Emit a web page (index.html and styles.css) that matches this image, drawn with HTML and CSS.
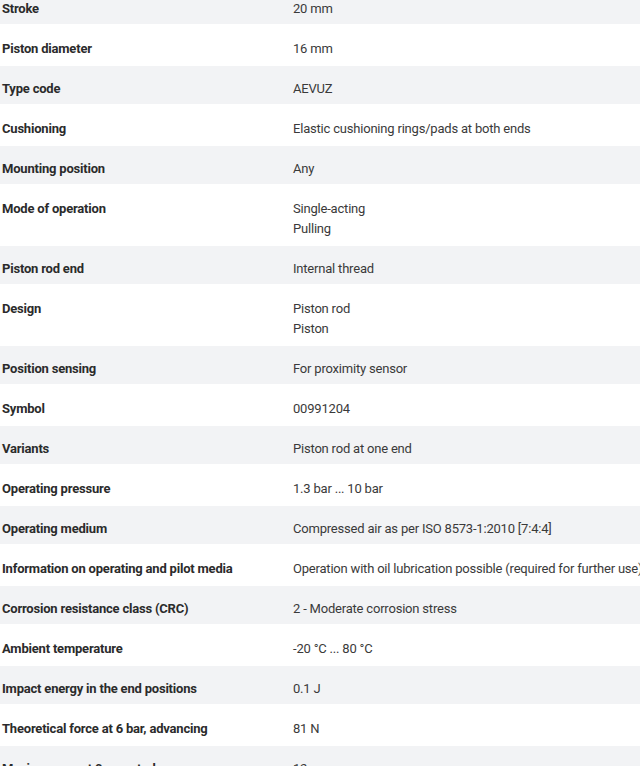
FILE: index.html
```html
<!DOCTYPE html>
<html lang="en">
<head>
<meta charset="utf-8">
<title>Technical data</title>
<link rel="stylesheet" href="styles.css">
</head>
<body>
<div class="specs">
  <div class="row"><div class="label">Stroke</div><div class="value">20 mm</div></div>
  <div class="row"><div class="label">Piston diameter</div><div class="value">16 mm</div></div>
  <div class="row"><div class="label">Type code</div><div class="value">AEVUZ</div></div>
  <div class="row"><div class="label">Cushioning</div><div class="value">Elastic cushioning rings/pads at both ends</div></div>
  <div class="row"><div class="label">Mounting position</div><div class="value">Any</div></div>
  <div class="row"><div class="label">Mode of operation</div><div class="value">Single-acting<br>Pulling</div></div>
  <div class="row"><div class="label">Piston rod end</div><div class="value">Internal thread</div></div>
  <div class="row"><div class="label">Design</div><div class="value">Piston rod<br>Piston</div></div>
  <div class="row"><div class="label">Position sensing</div><div class="value">For proximity sensor</div></div>
  <div class="row"><div class="label">Symbol</div><div class="value">00991204</div></div>
  <div class="row"><div class="label">Variants</div><div class="value">Piston rod at one end</div></div>
  <div class="row"><div class="label">Operating pressure</div><div class="value">1.3 bar ... 10 bar</div></div>
  <div class="row"><div class="label">Operating medium</div><div class="value">Compressed air as per ISO 8573-1:2010 [7:4:4]</div></div>
  <div class="row"><div class="label">Information on operating and pilot media</div><div class="value">Operation with oil lubrication possible (required for further use)</div></div>
  <div class="row"><div class="label">Corrosion resistance class (CRC)</div><div class="value">2 - Moderate corrosion stress</div></div>
  <div class="row"><div class="label">Ambient temperature</div><div class="value">-20 °C ... 80 °C</div></div>
  <div class="row"><div class="label">Impact energy in the end positions</div><div class="value">0.1 J</div></div>
  <div class="row"><div class="label">Theoretical force at 6 bar, advancing</div><div class="value">81 N</div></div>
  <div class="row"><div class="label">Moving mass at 0 mm stroke</div><div class="value">12 g</div></div>
</div>
</body>
</html>
```

FILE: styles.css
```css
html, body {
  margin: 0;
  padding: 0;
  background: #ffffff;
  overflow: hidden;
}

body {
  font-family: Roboto, "Liberation Sans", sans-serif;
  font-size: 13px;
  line-height: 20px;
  color: #333333;
}

.specs {
  margin-top: -14px;
  display: flex;
  flex-direction: column;
}

.row {
  display: grid;
  grid-template-columns: 291px 1fr;
  padding: 15px 0 7px 2px;
  background: #ffffff;
  white-space: nowrap;
}

.row:nth-child(odd) {
  background: #f2f3f5;
  padding: 13px 0 5px 2px;
}

.label {
  font-weight: 700;
  color: #2b2b2b;
  letter-spacing: -0.2px;
}

.value {
  font-weight: 400;
  color: #3a3a3a;
  letter-spacing: -0.2px;
}
```
